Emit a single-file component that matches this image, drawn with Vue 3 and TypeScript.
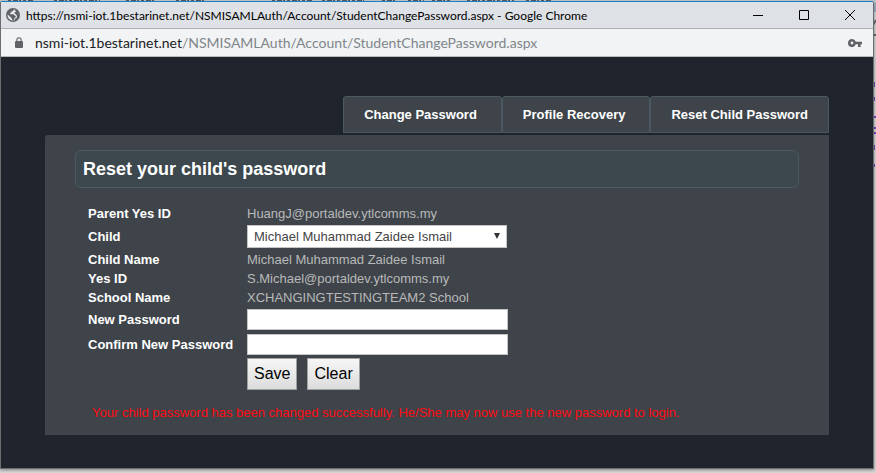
<script setup lang="ts">
import { ref } from 'vue'

interface Tab {
  label: string
  href: string
}

const host = 'nsmi-iot.1bestarinet.net'
const path = '/NSMISAMLAuth/Account/StudentChangePassword.aspx'

const tabs: Tab[] = [
  { label: 'Change Password', href: '#change' },
  { label: 'Profile Recovery', href: '#recovery' },
  { label: 'Reset Child Password', href: '#reset' },
]

const children: string[] = ['Michael Muhammad Zaidee Ismail']
const child = ref<string>(children[0])
const password = ref<string>('')
const confirmation = ref<string>('')

function clearForm(): void {
  password.value = ''
  confirmation.value = ''
}
</script>

<template>
  <div class="desktop">
    <svg class="behind-top" width="560" height="3" viewBox="0 0 560 3" aria-hidden="true">
      <path d="M8 1H34M54 1H100M126 1H154M176 1H204M272 1H312M322 1H364M382 1H396M408 1H424M432 1H450M467 1H514M526 1H552" stroke="#55585c" stroke-width="2" stroke-dasharray="3 2 5 1 2 2" />
    </svg>
    <svg class="behind-side" width="3" height="170" viewBox="0 0 3 170" aria-hidden="true">
      <path d="M0 3h3v9H0z" fill="#9fb0c4" />
      <path d="M0 25l3-5M0 35h3" stroke="#666a70" stroke-width="2" />
      <path d="M1 82v5M1 97v4M0 117h3M0 128h3M0 133h3M1 145v5M1 164v3" stroke="#7a3fc0" stroke-width="2" />
    </svg>

    <div class="window">
      <header class="titlebar">
        <svg class="globe" width="14" height="14" viewBox="0 0 14 14" aria-hidden="true">
          <circle cx="7" cy="7" r="7" fill="#5f6368" />
          <path d="M7.6 1.6C7.8 3 6.8 3.2 5.6 3.5C5 3.8 5.3 4.9 4.4 5.1C3.7 5.3 3.8 6.2 4.8 6.2H7.2C8.2 6.3 8.1 7.6 9.2 7.8C10.4 7.9 9.8 9.6 8.7 9.7C8.2 10.2 8.4 12 7 12.4C5.8 12.2 6.4 10.6 5.5 9.9C4.5 9 3.4 8.2 1.6 6.6C1.3 9.9 3.8 12.6 7 12.6C7.4 12.6 8 12.5 8.3 12.4L9.3 10.6C10.8 10.3 11.4 8.7 10.8 7.4C9.9 6.5 9.7 5.6 8.4 5.2C8 4.6 9.4 4.4 9.8 3.6C9.9 2.8 9 1.9 7.6 1.6Z" fill="#e4e6ea" />
        </svg>
        <span class="title">https://{{ host }}{{ path }} - Google Chrome</span>
        <div class="controls">
          <button type="button" aria-label="Minimize">
            <svg width="10" height="10" viewBox="0 0 10 10"><path d="M0 5.5H10" stroke="#000" /></svg>
          </button>
          <button type="button" aria-label="Maximize">
            <svg width="10" height="10" viewBox="0 0 10 10"><path d="M.5 .5H9.5V9.5H.5Z" fill="none" stroke="#000" /></svg>
          </button>
          <button type="button" aria-label="Close">
            <svg width="10" height="10" viewBox="0 0 10 10"><path d="M0 0L10 10M10 0L0 10" stroke="#000" /></svg>
          </button>
        </div>
      </header>

      <div class="addressbar">
        <svg class="lock" width="8" height="11" viewBox="0 0 8 11" aria-hidden="true">
          <path d="M1.9 5V2.8a2.1 2.1 0 0 1 4.2 0V5" fill="none" stroke="#5f6368" stroke-width="1.1" />
          <rect y="4" width="8" height="7" rx="1" fill="#5f6368" />
        </svg>
        <span class="url">{{ host }}<span class="path">{{ path }}</span></span>
        <svg class="key" width="14" height="8" viewBox="0 0 14 8" aria-hidden="true">
          <path fill-rule="evenodd" d="M4 0a4 4 0 1 0 3.8 5.3H10V8h2.6V5.3H14V2.7H7.8A4 4 0 0 0 4 0ZM4 2.6a1.4 1.4 0 1 1 0 2.8a1.4 1.4 0 0 1 0-2.8Z" fill="#5f6368" />
        </svg>
      </div>

      <main class="page">
        <nav class="tabs">
          <a v-for="tab in tabs" :key="tab.href" :href="tab.href">{{ tab.label }}</a>
        </nav>

        <section class="panel">
          <h1>Reset your child's password</h1>
          <form class="fields" @submit.prevent>
            <span class="label">Parent Yes ID</span>
            <span>HuangJ@portaldev.ytlcomms.my</span>

            <label for="child">Child</label>
            <div class="select">
              <select id="child" v-model="child">
                <option v-for="name in children" :key="name" :value="name">{{ name }}</option>
              </select>
              <svg class="arrow" width="6" height="6" viewBox="0 0 6 6" aria-hidden="true"><path d="M0 0H6L3 6Z" fill="#333" /></svg>
            </div>

            <span class="label">Child Name</span>
            <span>{{ child }}</span>

            <span class="label">Yes ID</span>
            <span>S.Michael@portaldev.ytlcomms.my</span>

            <span class="label">School Name</span>
            <span>XCHANGINGTESTINGTEAM2 School</span>

            <label for="password">New Password</label>
            <input id="password" v-model="password" type="password" />

            <label for="confirmation">Confirm New Password</label>
            <input id="confirmation" v-model="confirmation" type="password" />

            <div class="actions">
              <button type="submit">Save</button>
              <button type="button" @click="clearForm">Clear</button>
            </div>
          </form>
          <p class="message" role="status">
            Your child password has been changed successfully. He/She may now use the new password to login.
          </p>
        </section>
      </main>
    </div>
  </div>
</template>

<style>
body {
  background: #d0d0d0;
}
</style>

<style scoped>
.desktop {
  position: relative;
  box-sizing: border-box;
  display: flex;
  min-height: 100vh;
  padding: 2px 2px 4px 0;
  background: linear-gradient(#bfc1c3 0 3px, #d6d6d6 3px);
  font-family: "Liberation Sans", Arial, sans-serif;
  font-size: 13px;
}

.behind-top {
  position: absolute;
  top: 0;
  left: 0;
}

.behind-side {
  position: absolute;
  top: 0;
  right: 0;
}

.window {
  position: relative;
  flex: 1;
  display: flex;
  flex-direction: column;
  border: 1px solid #6b6d6e;
  border-top: 0;
  box-shadow: 0 1px 3px rgba(0, 0, 0, 0.4);
}

.titlebar {
  box-sizing: border-box;
  display: flex;
  align-items: center;
  height: 28px;
  padding-left: 5px;
  border-top: 1px solid #1c80c4;
  border-bottom: 1px solid #adafb2;
  margin-top: -1px;
  background: #dee1e6;
  color: #000;
  font-family: Lato, "Open Sans", sans-serif;
  font-size: 12px;
}

.title {
  flex: 1;
  margin-left: 6px;
  white-space: nowrap;
}

.controls {
  display: flex;
}

.controls button {
  display: flex;
  align-items: center;
  justify-content: center;
  width: 46px;
  height: 26px;
  padding: 0;
  border: 0;
  background: none;
}

.addressbar {
  display: flex;
  align-items: center;
  height: 27px;
  padding: 0 11px 0 14px;
  border-bottom: 1px solid #b9bbbb;
  background: #f1f3f4;
  color: #202124;
  font-family: Lato, "Open Sans", sans-serif;
  font-size: 14px;
}

.url {
  flex: 1;
  margin-left: 12px;
  white-space: nowrap;
}

.path {
  color: #80868b;
}

.page {
  flex: 1;
  padding: 39px 44px 33px;
  background: #20242c;
}

.tabs {
  display: flex;
  justify-content: flex-end;
  margin-bottom: 2px;
}

.tabs a {
  padding: 0 20px;
  border: 1px solid #4b5a62;
  border-radius: 3px 3px 0 0;
  background: #3e444a;
  color: #fff;
  font-weight: bold;
  line-height: 35px;
  text-decoration: none;
}

.tabs a:not(:last-child) {
  padding-right: 24px;
}

.panel {
  padding: 15px 30px 14px;
  border-radius: 3px 0 0 0;
  background: #3e444a;
}

h1 {
  margin: 0 0 17px;
  padding: 0 7px;
  border: 1px solid #4b5a62;
  border-radius: 6px;
  background: #3c484d;
  color: #fff;
  font-size: 18px;
  line-height: 36px;
}

.fields {
  display: grid;
  grid-template-columns: 157px 1fr;
  row-gap: 2px;
  align-items: center;
  justify-items: start;
  padding-left: 13px;
  color: #b9b9b9;
  line-height: 17px;
}

.fields > * {
  margin-left: 2px;
}

.fields label,
.fields .label {
  margin-left: 0;
  color: #fff;
  font-weight: bold;
}

.select {
  position: relative;
  margin-top: 1px;
  margin-bottom: 1px;
}

select,
input {
  box-sizing: border-box;
  border: 1px solid #c4c4c4;
  background: #fff;
  color: #444;
  font: inherit;
}

select {
  display: block;
  width: 260px;
  height: 23px;
  padding: 0 6px;
  appearance: none;
  border-radius: 0;
}

.arrow {
  position: absolute;
  top: 8px;
  right: 7px;
  pointer-events: none;
}

input {
  width: 261px;
  height: 21px;
  margin-top: 1px;
  margin-bottom: 1px;
  padding: 0 6px;
}

.actions {
  display: flex;
  grid-column: 2;
  gap: 10px;
}

.actions button {
  height: 32px;
  padding: 0 6px;
  border: 1px solid #a0a0a0;
  background: linear-gradient(#f6f6f6, #dcdcdc);
  color: #000;
  font: 16px "Liberation Sans", Arial, sans-serif;
}

.message {
  margin: 14px 0 0 17px;
  color: #ff0a10;
  line-height: 17px;
}
</style>
